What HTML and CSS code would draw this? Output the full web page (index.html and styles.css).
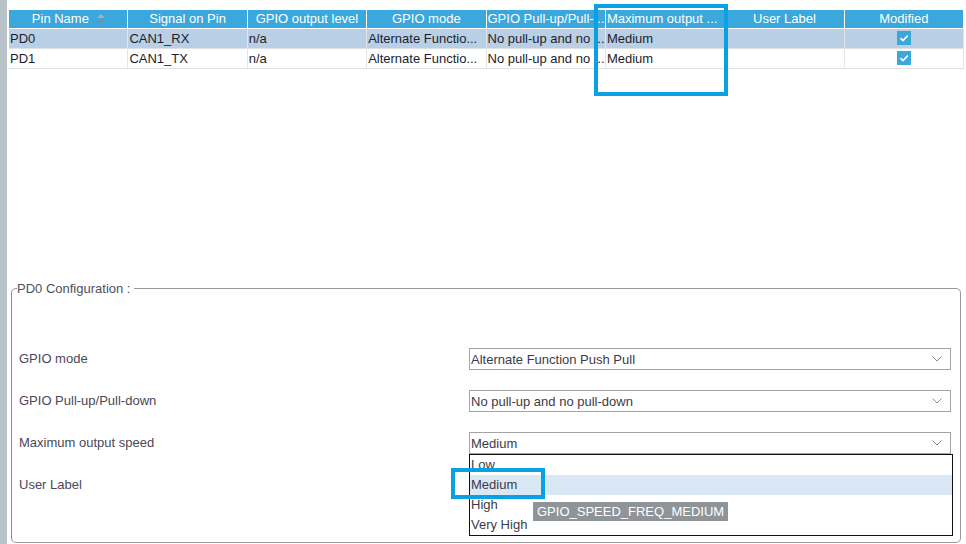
FILE: index.html
```html
<!DOCTYPE html>
<html lang="en">
<head>
  <meta charset="UTF-8">
  <title>Pin Configuration</title>
  <link rel="stylesheet" href="styles.css">
</head>
<body>

<div class="side-strip"></div>

<main class="content">
  <table class="pin-table">
    <thead>
      <tr>
        <th>Pin Name
          <svg class="sort-icon" width="8" height="10" viewBox="0 0 8 10">
            <path d="M4 0 L8 4 L0 4 Z" fill="#9fb0bf"/>
            <path d="M0 6 L8 6 L4 10 Z" fill="#6f93b5"/>
          </svg>
        </th>
        <th>Signal on Pin</th>
        <th>GPIO output level</th>
        <th>GPIO mode</th>
        <th class="left">GPIO Pull-up/Pull-...</th>
        <th class="left">Maximum output ...</th>
        <th>User Label</th>
        <th>Modified</th>
      </tr>
    </thead>
    <tbody>
      <tr class="selected">
        <td>PD0</td>
        <td>CAN1_RX</td>
        <td>n/a</td>
        <td>Alternate Functio...</td>
        <td>No pull-up and no ...</td>
        <td>Medium</td>
        <td></td>
        <td class="center"><span class="check"><svg width="14" height="14" viewBox="0 0 14 14"><path d="M3.5 7.2 L6 9.6 L10.8 4.6" stroke="#fff" stroke-width="1.6" fill="none"/></svg></span></td>
      </tr>
      <tr>
        <td>PD1</td>
        <td>CAN1_TX</td>
        <td>n/a</td>
        <td>Alternate Functio...</td>
        <td>No pull-up and no ...</td>
        <td>Medium</td>
        <td></td>
        <td class="center"><span class="check"><svg width="14" height="14" viewBox="0 0 14 14"><path d="M3.5 7.2 L6 9.6 L10.8 4.6" stroke="#fff" stroke-width="1.6" fill="none"/></svg></span></td>
      </tr>
    </tbody>
  </table>

  <!-- highlight on the speed column -->
  <div class="mark mark-column"></div>

  <fieldset class="config">
    <legend>PD0 Configuration :</legend>

    <div class="config-grid">
      <div class="config-label">GPIO mode</div>
      <div class="select">
        <span>Alternate Function Push Pull</span>
        <svg width="10" height="6" viewBox="0 0 10 6"><path d="M0.5 0.5 L5 5 L9.5 0.5" stroke="#8a8a8a" fill="none"/></svg>
      </div>

      <div class="config-label">GPIO Pull-up/Pull-down</div>
      <div class="select">
        <span>No pull-up and no pull-down</span>
        <svg width="10" height="6" viewBox="0 0 10 6"><path d="M0.5 0.5 L5 5 L9.5 0.5" stroke="#8a8a8a" fill="none"/></svg>
      </div>

      <div class="config-label">Maximum output speed</div>
      <div class="select open">
        <span>Medium</span>
        <svg width="10" height="6" viewBox="0 0 10 6"><path d="M0.5 0.5 L5 5 L9.5 0.5" stroke="#8a8a8a" fill="none"/></svg>

        <div class="dropdown">
          <ul class="options">
            <li class="first">Low</li>
            <li class="hover">Medium</li>
            <li>High</li>
            <li>Very High</li>
          </ul>
          <div class="tooltip">GPIO_SPEED_FREQ_MEDIUM</div>
          <div class="mark mark-item"></div>
        </div>
      </div>

      <div class="config-label">User Label</div>
      <div class="text-field"></div>
    </div>
  </fieldset>
</main>

</body>
</html>
```

FILE: styles.css
```css
body {
  margin: 0;
  height: 544px;
  display: flex;
  font-family: 'Liberation Sans', Arial, sans-serif;
  font-size: 13px;
  color: #1e1e2a;
  background-color: #fff;
  overflow: hidden;
}

.side-strip {
  width: 7px;
  background-color: #b8c3ca;
  flex-shrink: 0;
}

.content {
  flex: 1;
  padding: 10px 2px 0 2px;
  position: relative;
}

/* pin table */

.pin-table {
  width: 955px;
  table-layout: fixed;
  border-collapse: separate;
  border-spacing: 0;
}

.pin-table th {
  background-color: #3aa8dc;
  color: #fff;
  font-weight: normal;
  height: 18px;
  padding: 0 1px;
  border-right: 1px solid #fff;
  border-bottom: 1px solid #fff;
  white-space: nowrap;
  overflow: hidden;
  line-height: 18px;
}

.pin-table th.left {
  text-align: left;
}

.sort-icon {
  vertical-align: -1px;
  margin-left: 4px;
}

.pin-table td {
  height: 19px;
  padding: 0 1px;
  line-height: 19px;
  border-right: 1px solid #e2e6ea;
  border-bottom: 1px solid #dde2e7;
  white-space: nowrap;
  overflow: hidden;
}

.pin-table tr.selected td {
  background-color: #b8cfe6;
}

.pin-table td.center {
  text-align: center;
}

.check {
  display: inline-block;
  width: 14px;
  height: 14px;
  background-color: #3aa8dc;
  vertical-align: -2px;
}

.check svg {
  display: block;
}

/* annotation boxes */

.mark {
  position: absolute;
  border: 4px solid #0aa1e4;
  box-sizing: border-box;
}

.mark-column {
  left: 587px;
  top: 4px;
  width: 134px;
  height: 92px;
}

.mark-item {
  left: -19px;
  top: 13px;
  width: 94px;
  height: 31px;
}

/* configuration panel */

.config {
  box-sizing: border-box;
  margin: 212px 3px 0 2px;
  padding: 0 9px 0 7px;
  height: 262px;
  border: 1px solid #999;
  border-left-color: #8c8c8c;
  border-radius: 5px;
}

.config legend {
  padding: 0 4px 0 0;
  margin-left: -2px;
  color: #4f4f5a;
  font-size: 13px;
}

.config-grid {
  display: grid;
  grid-template-columns: 450px 1fr;
  row-gap: 20px;
  align-items: center;
  padding-top: 52px;
}

.config-label {
  color: #4a4759;
  height: 22px;
  line-height: 21px;
}

.select {
  position: relative;
  height: 20px;
  border: 1px solid #a4a4a4;
  display: flex;
  align-items: center;
  justify-content: space-between;
  padding: 0 8px 0 1px;
  color: #3c3c46;
}

.text-field {
  height: 22px;
}

.dropdown {
  position: absolute;
  left: -1px;
  top: 21px;
  width: 482px;
  height: 80px;
  background-color: #fff;
  border: 1px solid #111;
  z-index: 2;
}

.options {
  margin: 0;
  padding: 0;
  list-style: none;
  height: 80px;
  overflow: hidden;
}

.options li {
  height: 20px;
  line-height: 20px;
  padding-left: 1px;
  color: #3c3c46;
}

/* list is scrolled a little, the first entry is cut at the top */
.options li.first {
  height: 18px;
  line-height: 16px;
  margin-top: 0;
  padding-top: 2px;
  overflow: hidden;
}

.options li.hover {
  background-color: #dae8f5;
}

.tooltip {
  position: absolute;
  left: 63px;
  top: 47px;
  height: 19px;
  line-height: 19px;
  padding: 0 4px;
  background-color: #8f9499;
  color: #fff;
  white-space: nowrap;
}
```
